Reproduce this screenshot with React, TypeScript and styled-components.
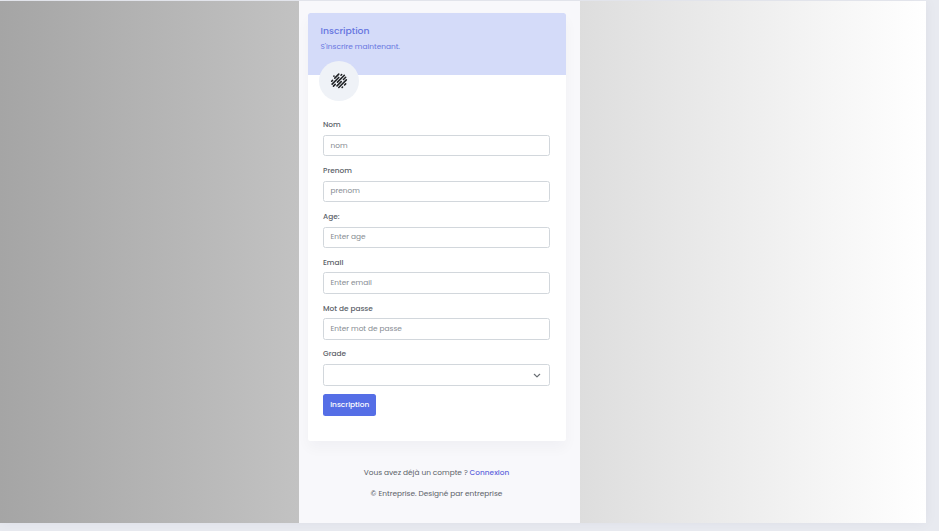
import React from "react";
import styled, { createGlobalStyle } from "styled-components";

const GlobalStyle = createGlobalStyle`
  *, *::before, *::after { box-sizing: border-box; }
  html, body { margin: 0; height: 100%; overflow: hidden; }
  body { background: #e8eaf0; font-family: Poppins, Inter, "Open Sans", sans-serif; color: #5a6067; }
`;

const Page = styled.div`
  width: 926px;
  height: 522px;
  margin-top: 1px;
  padding-left: 299px;
  background: linear-gradient(90deg, #a5a5a5, #ffffff);
  box-shadow: 0 0 12px rgba(40, 45, 80, 0.05);
`;

const Column = styled.main`
  width: 281px;
  height: 522px;
  padding: 11.5px 14.5px 0 8.5px;
  background: #f8f8fb;
`;

const Card = styled.section`
  height: 428px;
  border-radius: 2.5px;
  background: #fff;
  box-shadow: 0 7px 14px rgba(18, 38, 63, 0.035);
`;

const CardHeader = styled.header`
  height: 62.5px;
  padding: 11.5px 13px 0;
  border-radius: 2.5px 2.5px 0 0;
  background: #d4dbf9;
  color: #6675e0;
`;

const Text = styled.span<{ $size: number; $weight?: number }>`
  font-size: ${(p) => p.$size}px;
  font-weight: ${(p) => p.$weight ?? 400};
  white-space: nowrap;
`;

const Title = styled(Text).attrs({ as: "h1" })`
  margin: 0;
  line-height: 14px;
`;

const Subtitle = styled(Text).attrs({ as: "p" })`
  margin: 3px 0 0;
  line-height: 12px;
`;

const Avatar = styled.div`
  display: flex;
  align-items: center;
  justify-content: center;
  width: 40px;
  height: 40px;
  margin: -14px 0 0 11.5px;
  border-radius: 50%;
  background: #eff2f7;
`;

const Form = styled.form`
  padding: 18px 16px 0 15px;
`;

const Field = styled.div`
  height: 45.9px;
`;

const Label = styled(Text).attrs({ as: "label" })`
  display: block;
  height: 15.8px;
  padding-left: 0.5px;
  line-height: 12px;
`;

const Control = styled.div`
  display: flex;
  align-items: center;
  justify-content: space-between;
  height: 21.5px;
  padding: 0 7.5px 0 7px;
  border: 1px solid #d2d7dc;
  border-radius: 2.5px;
  background: #fff;
  color: #858a91;
`;

const Submit = styled.button`
  display: flex;
  align-items: center;
  justify-content: center;
  width: 53.5px;
  height: 21.5px;
  margin-top: 0;
  padding: 0 0 0 1px;
  border: 0;
  border-radius: 2.5px;
  background: #556ee6;
  color: #fff;
  font-family: inherit;
`;

const Footer = styled.footer`
  display: flex;
  flex-direction: column;
  align-items: center;
  gap: 8.5px;
  margin-top: 26.5px;
  line-height: 12px;
`;

const Line = styled.div`
  display: flex;
  gap: 1.8px;
`;

const Link = styled(Text).attrs({ as: "a" })`
  color: #6368dd;
`;

const Logo = () => (
  <svg width="20" height="20" viewBox="0 0 18 18" stroke="#1f2124" strokeWidth="1.4" strokeLinecap="round">
    <path d="M4.4 4.6 4.5 4.5M2.4 9.2 3.2 8.4M5.2 6.4 8.8 2.8M2.8 11.8 8.8 5.8M10.8 3.8 11.4 3.2M4 13.6 5.6 12M7.6 10 13.8 3.8M7.2 13.4 11 9.6M13 7.6 15 5.6M8.8 14.8 15.6 8M11.8 14.8 12.2 14.4M14 12.6 15 11.6" />
  </svg>
);

const Chevron = () => (
  <svg width="9" height="9" viewBox="0 0 9 9" fill="none" stroke="#6a6f74" strokeWidth="1.2" strokeLinecap="round" strokeLinejoin="round">
    <path d="M2.3 3.3 5 5.9 7.7 3.3" />
  </svg>
);

const fields = [
  { label: "Nom", hint: "nom" },
  { label: "Prenom", hint: "prenom" },
  { label: "Age:", hint: "Enter age" },
  { label: "Email", hint: "Enter email" },
  { label: "Mot de passe", hint: "Enter mot de passe" },
];

export default function App() {
  return (
    <>
      <GlobalStyle />
      <Page>
        <Column>
          <Card>
            <CardHeader>
              <Title $size={9.25} $weight={500}>Inscription</Title>
              <Subtitle $size={7.4}>S'inscrire maintenant.</Subtitle>
            </CardHeader>
            <Avatar><Logo /></Avatar>
            <Form>
              {fields.map((f) => (
                <Field key={f.label}>
                  <Label $size={7.4} $weight={500}>{f.label}</Label>
                  <Control><Text $size={7.4}>{f.hint}</Text></Control>
                </Field>
              ))}
              <Field>
                <Label $size={7.4} $weight={500}>Grade</Label>
                <Control><span /><Chevron /></Control>
              </Field>
              <Submit type="button"><Text $size={7.4} $weight={500}>Inscription</Text></Submit>
            </Form>
          </Card>
          <Footer>
            <Line>
              <Text $size={7.4}>Vous avez déjà un compte ?</Text>
              <Link $size={7.4} $weight={500}>Connexion</Link>
            </Line>
            <Text $size={7.4}>© Entreprise. Designé par entreprise</Text>
          </Footer>
        </Column>
      </Page>
    </>
  );
}
